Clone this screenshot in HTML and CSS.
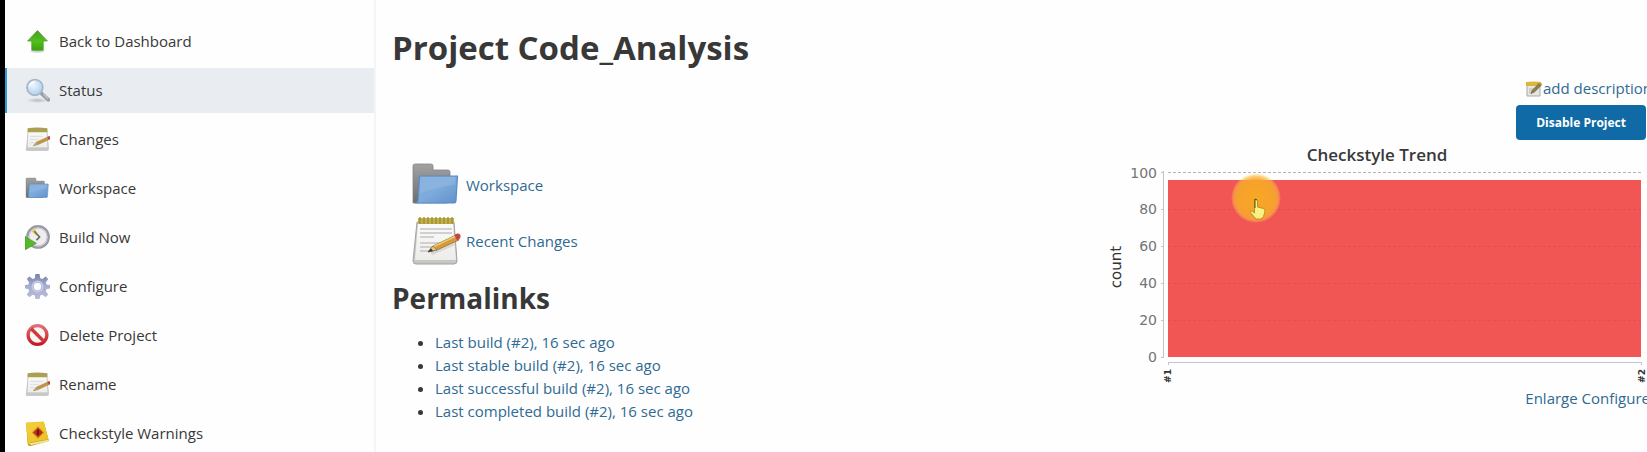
FILE: index.html
```html
<!DOCTYPE html>
<html lang="en">
<head>
<meta charset="utf-8">
<meta name="viewport" content="width=device-width, initial-scale=1">
<title>Code_Analysis [Jenkins]</title>
<link rel="stylesheet" href="styles.css">
</head>
<body>
<svg class="defs" width="0" height="0" aria-hidden="true">
  <defs>
    <linearGradient id="green" x1="0" y1="0" x2="0" y2="1"><stop offset="0" stop-color="#4f9a2c"/><stop offset=".55" stop-color="#4fc01c"/><stop offset="1" stop-color="#3da012"/></linearGradient>
    <linearGradient id="blue" x1="0" y1="0" x2="1" y2="1"><stop offset="0" stop-color="#7ba9da"/><stop offset=".5" stop-color="#7dabdc"/><stop offset="1" stop-color="#5f91ca"/></linearGradient>
    <linearGradient id="grey" x1="0" y1="0" x2="0" y2="1"><stop offset="0" stop-color="#a2a2a2"/><stop offset="1" stop-color="#6c6c6c"/></linearGradient>
    <linearGradient id="paper" x1="0" y1="0" x2="0" y2="1"><stop offset="0" stop-color="#fbfbfa"/><stop offset="1" stop-color="#ececea"/></linearGradient>
    <linearGradient id="gear" x1="0" y1="0" x2="0" y2="1"><stop offset="0" stop-color="#7683a8"/><stop offset=".5" stop-color="#a9aed2"/><stop offset="1" stop-color="#b9bada"/></linearGradient>
    <linearGradient id="red" x1="0" y1="0" x2="0" y2="1"><stop offset="0" stop-color="#dd7377"/><stop offset="1" stop-color="#c31a20"/></linearGradient>
    <linearGradient id="yellow" x1="0" y1="0" x2="1" y2="1"><stop offset="0" stop-color="#f3cf3e"/><stop offset="1" stop-color="#eac31f"/></linearGradient>
    <radialGradient id="lens" cx=".4" cy=".35" r=".7"><stop offset="0" stop-color="#eef6fd"/><stop offset="1" stop-color="#a9cdee"/></radialGradient>
    <radialGradient id="shade"><stop offset="0" stop-color="#888" stop-opacity=".5"/><stop offset="1" stop-color="#888" stop-opacity="0"/></radialGradient>
    <symbol id="folder" viewBox="0 0 50 50">
      <path d="M2 43V6q0-2 2-2h16q2 0 2 2v4h15q2 0 2 2v8L36 43z" fill="url(#grey)" stroke="#858585" stroke-width=".8"/>
      <path d="M8.500 16h38l-1.500 24q0 3-2 3H4q3 0 3-3z" fill="url(#blue)" stroke="#5a8bc4" stroke-width="1.200"/>
      <path d="M9.500 17h35l-1 8q-20 2-35 9z" fill="#fff" opacity=".1"/>
    </symbol>
    <symbol id="notepad" viewBox="0 0 50 50">
      <path d="M6 6h37l3 39q0 3-3 3H5q-3 0-3-3z" fill="#c6c6c3" stroke="#a2a29f"/>
      <path d="M7 7h35l3 37H4z" fill="url(#paper)"/>
      <path d="M7 2h36v6H7z" fill="#c0b04c"/>
      <path d="M9 1v7M13 1v7M17 1v7M21 1v7M25 1v7M29 1v7M33 1v7M37 1v7M41 1v7" stroke="#9c8d34" stroke-width="1.300"/>
      <path d="M9 13h32M9 17h32M9 21h14M9 27h21M9 31h14M9 35h12" stroke="#c4c4c4" stroke-width="1.300"/>
      <path d="M20 37l23-10" stroke="#777" stroke-opacity=".2" stroke-width="5"/>
      <path d="M17 36l5-6 23-11 3 5-22 10z" fill="#d49a3c" stroke="#9d7531" stroke-width=".8"/>
      <path d="M23 30.500l21-10" stroke="#ecc671" stroke-width="1.500"/>
      <path d="M17 36l5-6 4 4z" fill="#e0c48e" stroke="#7b603a" stroke-width=".6"/>
      <path d="M17 36l3-3.500 2 2.500z" fill="#333"/>
      <path d="M43.500 19l2.500-1.500q3-.5 3.500 2t-1.500 3.800l-2 1z" fill="#c9434a"/>
    </symbol>
    <symbol id="note" viewBox="0 0 24 24">
      <path d="M3 2h18l2 19q0 2-2 2H2q-2 0-1-3z" fill="#c9c9c5"/>
      <path d="M3 2h18l1 18H2z" fill="url(#paper)" stroke="#bdbdb9" stroke-width=".6"/>
      <path d="M2.500 1.200q9-1.500 19 0v3.800h-19z" fill="#aaa052"/>
      <path d="M5 9h12M5 12h8M5 15h4" stroke="#e0e0de"/>
      <path d="M8 18l3-3.500 11-5 1.300 2.500-11 5z" fill="#c39444" stroke="#a07d48" stroke-width=".4"/>
      <path d="M8 18l3-3.500 1.300 2.500z" fill="#a8a293"/>
      <path d="M21.500 9.500l1.500-.8q2 .6 1 3l-1.300.6z" fill="#c3433a"/>
    </symbol>
  </defs>
</svg>

<nav class="sidebar" aria-label="Project">
  <a class="task" href="#"><svg class="icon" viewBox="0 0 24 24"><ellipse cx="12" cy="21.500" rx="9" ry="2" fill="url(#shade)"/><path d="M12 1.500L21.500 11.500H17.500V20.500H6.500V11.500H2.500z" fill="url(#green)" stroke="#54a52d" stroke-width=".8" stroke-linejoin="round"/></svg>Back to Dashboard</a>
  <a class="task task-active" href="#" aria-current="page"><svg class="icon" viewBox="0 0 24 24"><ellipse cx="12" cy="21.500" rx="11" ry="2.500" fill="url(#shade)"/><path d="M16 15l6.500 6" stroke="#9b9da1" stroke-width="3.500" stroke-linecap="round"/><path d="M17.500 15.500l4.500 4.500" stroke="#c3c5c9" stroke-width="1.300"/><circle cx="9.500" cy="9" r="7.600" fill="url(#lens)" stroke="#a5b3c8" stroke-width="1.600"/><path d="M4.500 8q1-4 5-4" fill="none" stroke="#fff" stroke-width="1.500"/></svg>Status</a>
  <a class="task" href="#"><svg class="icon"><use href="#note"/></svg>Changes</a>
  <a class="task" href="#"><svg class="icon"><use href="#folder"/></svg>Workspace</a>
  <a class="task" href="#"><svg class="icon" viewBox="0 0 24 24"><circle cx="12.500" cy="11.500" r="10.300" fill="#eeeef0" stroke="#9a9aa4" stroke-width="2.200"/><circle cx="12.500" cy="11.500" r="8.500" fill="none" stroke="#cdcdd4"/><path d="M6 6l4-3 2 8z" fill="#e3ce5d"/><path d="M9 6l5 5.500-3 3" fill="none" stroke="#6c6c62" stroke-width="1.600"/><path d="M0 11l11 6.500L0 24z" fill="#54b82a" stroke="#429b1d" stroke-width=".6"/></svg>Build Now</a>
  <a class="task" href="#"><svg class="icon" viewBox="0 0 24 24"><g fill="url(#gear)"><path fill-rule="evenodd" d="M10 0h4l.6 4 2 .8 3.200-2.400 2.500 2.500L20 8.200l.8 2 3.700.5v3.200l-3.700.6-.8 2 2.300 3.200-2.500 2.500-3.200-2.300-2 .8L14 24.300h-4l-.6-3.600-2-.8-3.200 2.300-2.500-2.500L4 16.500l-.8-2-3.700-.6v-3.200l3.700-.5.8-2L1.700 4.900l2.500-2.500 3.200 2.400 2-.8zM12 8.500a3.500 3.500 0 1 0 0 7 3.500 3.500 0 0 0 0-7z"/></g><circle cx="12" cy="12" r="4.800" fill="none" stroke="#c6cae4" stroke-width="1.800"/></svg>Configure</a>
  <a class="task" href="#"><svg class="icon" viewBox="0 0 24 24"><circle cx="12" cy="11.500" r="9" fill="#fbf4f4" stroke="url(#red)" stroke-width="3.200"/><path d="M6 5.500l12 12" stroke="#cb3b40" stroke-width="3.200"/></svg>Delete Project</a>
  <a class="task" href="#"><svg class="icon"><use href="#note"/></svg>Rename</a>
  <a class="task" href="#"><svg class="icon" viewBox="0 0 24 24"><path d="M1 2L18 .8l5 18.500L5.500 24q-3 .3-3-2.500z" fill="#c69c1c"/><path d="M1 1.500L18 .5 22.500 17.500 6 20.500q-2 .5-3 1.500z" fill="url(#yellow)"/><path d="M3.500 21.500L22.500 18v1.500L6 23z" fill="#f6e7a0"/><path d="M12.500 5l6 6-6 6-6-6z" fill="#c79422"/><path d="M12.500 6.500L17 11l-4.500 4.500L8 11z" fill="#c5231c"/><path d="M12.500 8.500v5" stroke="#4c1612" stroke-width="1.500"/></svg>Checkstyle Warnings</a>
</nav>

<main class="main">
  <section class="project">
    <h1 class="title">Project Code_Analysis</h1>
    <div class="shortcuts">
      <a class="shortcut" href="#"><svg class="icon-large"><use href="#folder"/></svg>Workspace</a>
      <a class="shortcut" href="#"><svg class="icon-large"><use href="#notepad"/></svg>Recent Changes</a>
    </div>
    <h2 class="subtitle">Permalinks</h2>
    <ul class="permalinks">
      <li><a href="#">Last build (#2), 16 sec ago</a></li>
      <li><a href="#">Last stable build (#2), 16 sec ago</a></li>
      <li><a href="#">Last successful build (#2), 16 sec ago</a></li>
      <li><a href="#">Last completed build (#2), 16 sec ago</a></li>
    </ul>
  </section>

  <section class="side">
    <a class="describe" href="#"><svg class="icon-small" viewBox="0 0 16 16"><path d="M1 2h13v13H1z" fill="#e6e6e3" stroke="#a9a9a4"/><path d="M0 1q7-1 15 0v4H0z" fill="#dcb53e"/><path d="M3 8h6M3 10h4M3 12h3" stroke="#bbb"/><path d="M5 12.500l1.500-3.500 7-7 2 2-7 7z" fill="#91814b" stroke="#62552d" stroke-width=".6"/><path d="M13 2.500l1.500-1.500L16 3l-1 1z" fill="#d6a132"/></svg>add description</a>
    <button class="button" type="button">Disable Project</button>
    <h3 class="chart-title">Checkstyle Trend</h3>
    <svg class="chart" viewBox="0 0 540 222" role="img" aria-label="Checkstyle trend: count per build">
      <defs><radialGradient id="spot"><stop offset="0" stop-color="#f7a824"/><stop offset=".72" stop-color="#f7a52a" stop-opacity=".95"/><stop offset=".88" stop-color="#f9b83a" stop-opacity=".65"/><stop offset="1" stop-color="#fbdc5a" stop-opacity="0"/></radialGradient></defs>
      <path class="grid" d="M61 7.500H534"/>
      <path class="area" d="M61 15H534V192H61z"/>
      <path class="grid-over" d="M61 44.500H534M61 81.500H534M61 118.500H534M61 155.500H534"/>
      <path class="axis" d="M56.500 6V193M54 7.500h2M54 44.500h2M54 81.500h2M54 118.500h2M54 155.500h2M54 192.500h2M61 197.500H535M61.500 197v3M534.500 197v3"/>
      <g class="ticks">
        <text x="50" y="13">100</text><text x="50" y="49">80</text><text x="50" y="86">60</text><text x="50" y="123">40</text><text x="50" y="160">20</text><text x="50" y="197">0</text>
      </g>
      <text class="axis-name" transform="translate(14 102) rotate(-90)">count</text>
      <text class="build" transform="translate(64 211) rotate(-90)">#1</text>
      <text class="build" transform="translate(538 211) rotate(-90)">#2</text>
      <circle cx="149" cy="33" r="25" fill="url(#spot)"/>
      <path d="M147.500 35q1.500-1.500 3 0v7l6 1.500q1.500 1 1.500 3l-1.500 5-2.500 2.500h-5l-5.500-6.500q-.5-2 1.500-1.500l2.500 2z" fill="#faf083" stroke="#b3952a"/>
      <path d="M148 34v9M148 34l2 1" stroke="#5b4a0a" fill="none"/>
    </svg>
    <div class="chart-links"><a href="#">Enlarge</a> <a href="#">Configure</a></div>
  </section>
</main>
</body>
</html>
```
FILE: styles.css
```css
* { box-sizing: border-box; }

body {
  margin: 0;
  min-height: 100vh;
  display: flex;
  overflow: hidden;
  border-left: 5px solid #000;
  background: #fefefe;
  color: #383838;
  font: 500 15px/23px "Open Sans", "Noto Sans", sans-serif;
}

a { color: #2f6a93; text-decoration: none; }

.defs { position: absolute; }

.sidebar {
  flex: 0 0 371px;
  display: flex;
  flex-direction: column;
  gap: 4px;
  padding-top: 19px;
  border-right: 2px solid #f5f5f6;
}

.task {
  display: flex;
  align-items: center;
  gap: 9px;
  height: 45px;
  padding-left: 18px;
  border-left: 2px solid transparent;
  color: #383838;
}

.task-active { background: #e9edf2; border-left-color: #2f9bdb; }

.icon { width: 25px; height: 25px; flex: none; }
.icon-large { width: 50px; height: 50px; flex: none; }
.icon-small { width: 16px; height: 16px; flex: none; }

.main {
  flex: 1;
  display: flex;
  justify-content: space-between;
  padding-left: 16px;
}

.title {
  margin: 24px 0 0;
  font-size: 33px;
  line-height: 48px;
  font-weight: 700;
  white-space: nowrap;
}

.shortcuts {
  display: flex;
  flex-direction: column;
  gap: 6px;
  margin: 88px 0 0 19px;
}

.shortcut { display: flex; align-items: center; gap: 5px; }

.subtitle {
  margin: 12px 0 13px;
  font-size: 28px;
  line-height: 40px;
  font-weight: 700;
}

.permalinks { margin: 0; padding-left: 43px; }

.side {
  flex: 0 0 540px;
  display: flex;
  flex-direction: column;
  align-items: flex-end;
  padding-top: 77px;
  white-space: nowrap;
}

.describe { display: flex; align-items: center; gap: 1px; margin-right: -5px; }

.button {
  height: 35px;
  margin: 5px 1px 0 0;
  padding: 0 20px;
  border: 0;
  border-radius: 4px;
  background: #0f6aa5;
  color: #fff;
  font: 700 12px/20px "Open Sans", "Noto Sans", sans-serif;
}

.chart-title {
  align-self: center;
  margin: 4px 0 0;
  font-size: 17px;
  line-height: 21px;
  font-weight: 600;
}

.chart { display: block; width: 100%; height: auto; }
.grid { stroke: #b5b5b5; stroke-dasharray: 3 2; }
.grid-over { stroke: #d84b4b; stroke-dasharray: 3 2; opacity: .6; }
.area { fill: #f25654; }
.axis { fill: none; stroke: #c4c4c4; }
.ticks { fill: #747474; font: 14px "DejaVu Sans", sans-serif; text-anchor: end; }
.axis-name { fill: #333; font: 15px "DejaVu Sans", sans-serif; text-anchor: middle; text-rendering: geometricPrecision; }
.build { fill: #333; font: bold 9px "DejaVu Sans", sans-serif; text-anchor: middle; }

.chart-links { margin-right: -3px; }
```
